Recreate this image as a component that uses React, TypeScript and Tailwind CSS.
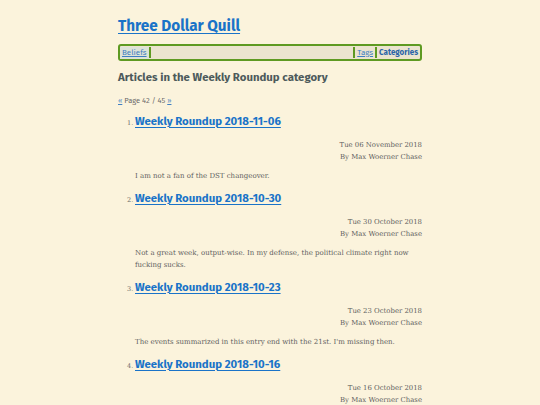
import React from "react";

const ARTICLES = [
  {
    title: "Weekly Roundup 2018-11-06",
    date: "Tue 06 November 2018",
    summary: "I am not a fan of the DST changeover.",
  },
  {
    title: "Weekly Roundup 2018-10-30",
    date: "Tue 30 October 2018",
    summary:
      "Not a great week, output-wise. In my defense, the political climate right now fucking sucks.",
  },
  {
    title: "Weekly Roundup 2018-10-23",
    date: "Tue 23 October 2018",
    summary: "The events summarized in this entry end with the 21st. I'm missing then.",
  },
  {
    title: "Weekly Roundup 2018-10-16",
    date: "Tue 16 October 2018",
    summary: "Another week down.",
  },
];

const sans = "font-['Fira_Sans','Roboto','Open_Sans',sans-serif]";
const serif = "font-['Roboto_Slab','DejaVu_Serif',serif]";

export default function App() {
  return (
    <div className="min-h-[405px] w-full bg-[#fbf3dc] overflow-hidden">
      <div className="mx-auto w-[304px] pt-[14px]">
        <h1 className={`${sans} text-[15.3px] font-bold leading-[24px]`}>
          <a href="#" className="text-[#1a73c8] underline decoration-1 underline-offset-2">
            Three Dollar Quill
          </a>
        </h1>

        <nav className={`${sans} mt-[6px] flex h-[17px] items-center rounded-[3px] border-[2px] border-[#5e9a22] bg-[#ebe4cf] text-[8px] leading-none`}>
          <a href="#" className="bg-[#dde3d8] px-[2px] py-[2px] text-[#3f7fc2] underline">
            Beliefs
          </a>
          <span className="h-[11px] w-[2px] bg-[#5e9a22]" />
          <span className="flex-1" />
          <span className="h-[11px] w-[2px] bg-[#5e9a22]" />
          <a href="#" className="px-[2px] text-[#3f7fc2] underline">
            Tags
          </a>
          <span className="h-[11px] w-[2px] bg-[#5e9a22]" />
          <span className="px-[2px] font-bold text-[#2a64a8]">Categories</span>
        </nav>

        <h2 className={`${sans} mt-[7px] text-[11.4px] font-bold leading-[18px] text-[#4d5a5b]`}>
          Articles in the Weekly Roundup category
        </h2>

        <p className={`${sans} mt-[10px] text-[7.5px] leading-[10px] text-[#6b6b6b]`}>
          <a href="#" className="text-[#3f7fc2] underline">«</a> Page 42 / 45{" "}
          <a href="#" className="text-[#3f7fc2] underline">»</a>
        </p>

        <ol className="mt-[6px] pl-[17px]">
          {ARTICLES.map((a, i) => (
            <li key={a.title} className="mb-[7px]">
              <div className="flex items-baseline">
                <span className={`${serif} -ml-[8px] w-[8px] text-[6.5px] text-[#6b6b6b]`}>{i + 1}.</span>
                <a
                  href="#"
                  className={`${sans} text-[11.4px] font-bold leading-[18px] text-[#1a73c8] underline decoration-1 underline-offset-2`}
                >
                  {a.title}
                </a>
              </div>
              <div className={`${serif} mt-[9px] text-right text-[6.9px] leading-[12px] text-[#5f5f5f]`}>
                <div>{a.date}</div>
                <div>By Max Woerner Chase</div>
              </div>
              <p className={`${serif} mt-[7px] text-[7px] leading-[12px] text-[#5f5f5f]`}>{a.summary}</p>
            </li>
          ))}
        </ol>
      </div>
    </div>
  );
}
